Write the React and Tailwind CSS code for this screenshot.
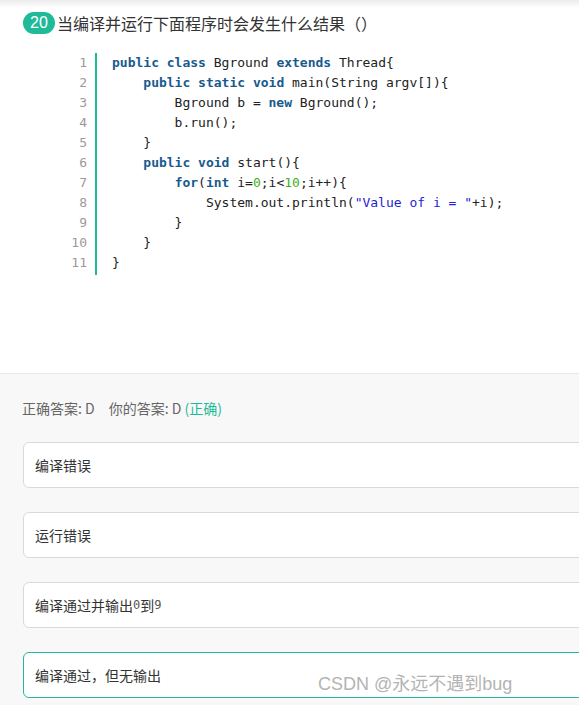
import React from 'react';

// 代码行：每段 [类型, 文本]
const K = (t) => ['k', t];
const N = (t) => ['n', t];
const S = (t) => ['s', t];
const T = (t) => ['t', t];

const CODE = [
  [K('public'), T(' '), K('class'), T(' Bground '), K('extends'), T(' Thread{')],
  [T('    '), K('public'), T(' '), K('static'), T(' '), K('void'), T(' main(String argv[]){')],
  [T('        Bground b = '), K('new'), T(' Bground();')],
  [T('        b.run();')],
  [T('    }')],
  [T('    '), K('public'), T(' '), K('void'), T(' start(){')],
  [T('        '), K('for'), T('('), K('int'), T(' i='), N('0'), T(';i<'), N('10'), T(';i++){')],
  [T('            System.out.println('), S('"Value of i = "'), T('+i);')],
  [T('        }')],
  [T('    }')],
  [T('}')],
];

const tokenClass = {
  k: 'text-[#195a8c] font-bold',
  n: 'text-[#3fae1b]',
  s: 'text-[#2424d6]',
  t: 'text-[#222]',
};

const OPTIONS = [
  { text: '编译错误' },
  { text: '运行错误' },
  { text: <>编译通过并输出<span className="font-['DejaVu_Sans_Mono',monospace] text-[12px] text-[#555]">0</span>到<span className="font-['DejaVu_Sans_Mono',monospace] text-[12px] text-[#555]">9</span></> },
  { text: '编译通过，但无输出', picked: true },
];

export default function App() {
  return (
    <div className="relative w-[579px] h-[705px] overflow-hidden bg-white font-['Noto_Sans_CJK_SC',sans-serif]">
      <div className="h-2 bg-gradient-to-b from-[#ececec] to-white" />

      {/* 题目 */}
      <div className="flex items-center pl-[23px] mt-1 h-[22px]">
        <span className="h-[22px] w-8 rounded-full bg-[#1fba98] text-white text-[16px] leading-[22px] text-center font-['Liberation_Sans',sans-serif]">20</span>
        <span className="ml-[2px] text-[16px] text-[#333] leading-[22px]">当编译并运行下面程序时会发生什么结果（）</span>
      </div>

      {/* 代码 */}
      <div className="flex mt-[19px] mb-[98px] font-['DejaVu_Sans_Mono',monospace] text-[13px] leading-[20px]">
        <div className="w-[88px] pr-[1px] text-right text-[#9a9a9a]">
          {CODE.map((_, i) => <div key={i}>{i + 1}</div>)}
        </div>
        <div className="ml-[7px] w-[2px] bg-[#1fba98]" />
        <div className="pl-[15px] pb-[2px] whitespace-pre">
          {CODE.map((line, i) => (
            <div key={i}>
              {line.map(([type, text], j) => <span key={j} className={tokenClass[type]}>{text}</span>)}
            </div>
          ))}
        </div>
      </div>

      {/* 答案区 */}
      <div className="border-t border-[#e8e8e8] bg-[#f8f8f8] h-[400px] pt-[24px] pl-[22px]">
        <div className="text-[14px] leading-[20px] text-[#666]">
          正确答案: D<span className="ml-[14px]">你的答案: D</span> <span className="text-[#1fba98]">(正确)</span>
        </div>
        <div className="mt-[24px] ml-[1px] flex flex-col gap-6 w-[600px]">
          {OPTIONS.map((o, i) => (
            <div
              key={i}
              className={`h-[46px] rounded-md bg-white border flex items-center pl-[11px] text-[14px] text-[#333] ${o.picked ? 'border-[#1fba98]' : 'border-[#d9d9d9]'}`}
            >
              {o.text}
            </div>
          ))}
        </div>
      </div>

      <div className="absolute left-[318px] top-[671px] text-[18px] leading-[26px] text-[#b4b4b4] font-['Liberation_Sans','Noto_Sans_CJK_SC',sans-serif] [text-shadow:1px_1px_0_#fff]">
        CSDN @永远不遇到bug
      </div>
    </div>
  );
}
